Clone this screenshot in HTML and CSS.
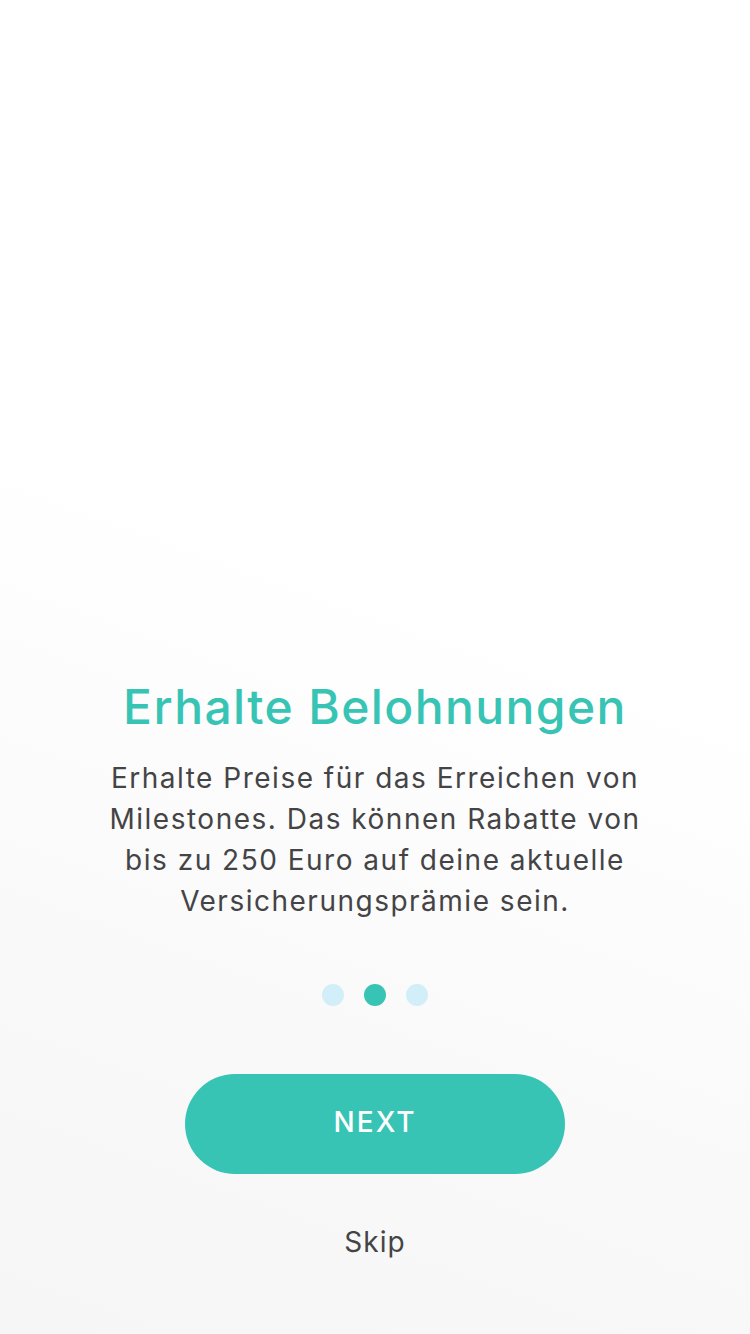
FILE: index.html
```html
<!DOCTYPE html>
<html lang="de">
<head>
<meta charset="utf-8">
<title>Erhalte Belohnungen</title>
<link rel="stylesheet" href="styles.css">
</head>
<body>
<main class="screen">
  <section class="content">
    <h1 class="title">Erhalte Belohnungen</h1>
    <p class="text">Erhalte Preise für das Erreichen von<br>Milestones. Das können Rabatte von<br>bis zu 250 Euro auf deine aktuelle<br>Versicherungsprämie sein.</p>
    <div class="dots">
      <span class="dot"></span>
      <span class="dot dot-active"></span>
      <span class="dot"></span>
    </div>
    <button class="next">NEXT</button>
    <button class="skip">Skip</button>
  </section>
</main>
</body>
</html>
```

FILE: styles.css
```css
html, body {
  margin: 0;
  padding: 0;
}
body {
  width: 750px;
  height: 1334px;
  overflow: hidden;
  font-family: Inter, "Noto Sans", sans-serif;
}
.screen {
  height: 1334px;
  background: linear-gradient(200deg, #ffffff 0%, #ffffff 45%, #f9f9f9 75%, #f6f6f6 100%);
  display: flex;
  flex-direction: column;
}
.content {
  padding-top: 678px;
  display: flex;
  flex-direction: column;
  align-items: center;
}
.title {
  margin: 0;
  font-size: 48px;
  line-height: 58px;
  font-weight: 500;
  color: #38c4b4;
  text-align: center;
  letter-spacing: 1.4px;
}
.text {
  margin: 22px 0 0;
  font-size: 28px;
  line-height: 41px;
  font-weight: 400;
  color: #444446;
  text-align: center;
  letter-spacing: 1.5px;
}
.dots {
  margin-top: 62px;
  display: flex;
  gap: 20px;
}
.dot {
  width: 22px;
  height: 22px;
  border-radius: 50%;
  background: #d2eef9;
}
.dot-active {
  background: #38c4b4;
}
.next {
  margin-top: 68px;
  width: 380px;
  height: 100px;
  border: none;
  border-radius: 50px;
  background: #38c4b4;
  color: #ffffff;
  font-family: Inter, "Noto Sans", sans-serif;
  font-size: 28px;
  font-weight: 500;
  letter-spacing: 2px;
  padding: 0 0 5px;
}
.skip {
  margin-top: 48px;
  border: none;
  background: none;
  padding: 0;
  font-family: Inter, "Noto Sans", sans-serif;
  font-size: 28px;
  line-height: 41px;
  color: #444446;
  letter-spacing: 1px;
}
```
